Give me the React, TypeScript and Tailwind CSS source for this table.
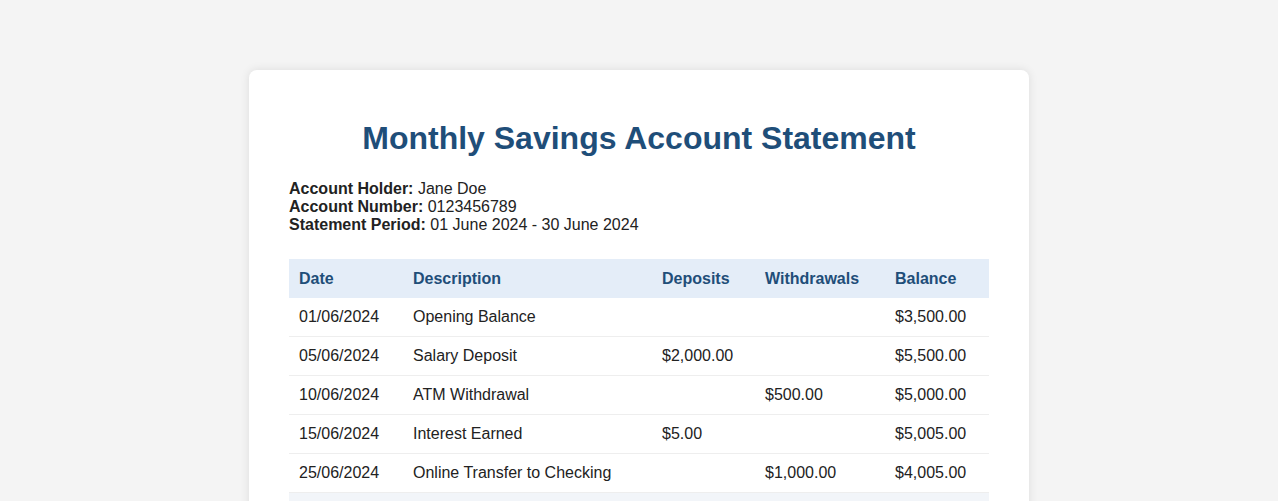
const rows = [
  { date: "01/06/2024", desc: "Opening Balance", dep: "", wd: "", bal: "$3,500.00" },
  { date: "05/06/2024", desc: "Salary Deposit", dep: "$2,000.00", wd: "", bal: "$5,500.00" },
  { date: "10/06/2024", desc: "ATM Withdrawal", dep: "", wd: "$500.00", bal: "$5,000.00" },
  { date: "15/06/2024", desc: "Interest Earned", dep: "$5.00", wd: "", bal: "$5,005.00" },
  { date: "25/06/2024", desc: "Online Transfer to Checking", dep: "", wd: "$1,000.00", bal: "$4,005.00" },
];

export default function App() {
  return (
    <div className="min-h-screen bg-[#f4f4f4] pt-[70px] pb-10 font-['Liberation_Sans',Arial,sans-serif] text-[#222] text-base">
      {/* Statement card */}
      <div className="w-[780px] mx-auto bg-white rounded-lg shadow-[0_0_10px_rgba(0,0,0,0.1)] px-10 pt-[50px] pb-10">
        <h1 className="text-[32px] font-bold text-center text-[#1f4e79] leading-[37px] mb-[23px]">
          Monthly Savings Account Statement
        </h1>

        <div className="leading-[18px] mb-[25px]">
          <div><span className="font-bold">Account Holder:</span> Jane Doe</div>
          <div><span className="font-bold">Account Number:</span> 0123456789</div>
          <div><span className="font-bold">Statement Period:</span> 01 June 2024 - 30 June 2024</div>
        </div>

        <table className="w-full border-collapse text-left table-fixed">
          <thead>
            <tr className="bg-[#e4edf8] text-[#1f4e79]">
              <th className="w-[114px] px-[10px] py-[10px] leading-[19px] font-bold">Date</th>
              <th className="w-[249px] px-[10px] py-[10px] leading-[19px] font-bold">Description</th>
              <th className="w-[103px] px-[10px] py-[10px] leading-[19px] font-bold">Deposits</th>
              <th className="w-[130px] px-[10px] py-[10px] leading-[19px] font-bold">Withdrawals</th>
              <th className="px-[10px] py-[10px] leading-[19px] font-bold">Balance</th>
            </tr>
          </thead>
          <tbody>
            {rows.map((r) => (
              <tr key={r.date} className="border-b border-[#eeeeee]">
                <td className="px-[10px] py-[10px] leading-[18px]">{r.date}</td>
                <td className="px-[10px] py-[10px] leading-[18px]">{r.desc}</td>
                <td className="px-[10px] py-[10px] leading-[18px]">{r.dep}</td>
                <td className="px-[10px] py-[10px] leading-[18px]">{r.wd}</td>
                <td className="px-[10px] py-[10px] leading-[18px]">{r.bal}</td>
              </tr>
            ))}
          </tbody>
          <tfoot>
            <tr className="bg-[#f2f5f9] font-bold">
              <td className="px-[10px] py-[10px] leading-[18px]" colSpan={4}>Closing Balance</td>
              <td className="px-[10px] py-[10px] leading-[18px]">$4,005.00</td>
            </tr>
          </tfoot>
        </table>
      </div>
    </div>
  );
}
